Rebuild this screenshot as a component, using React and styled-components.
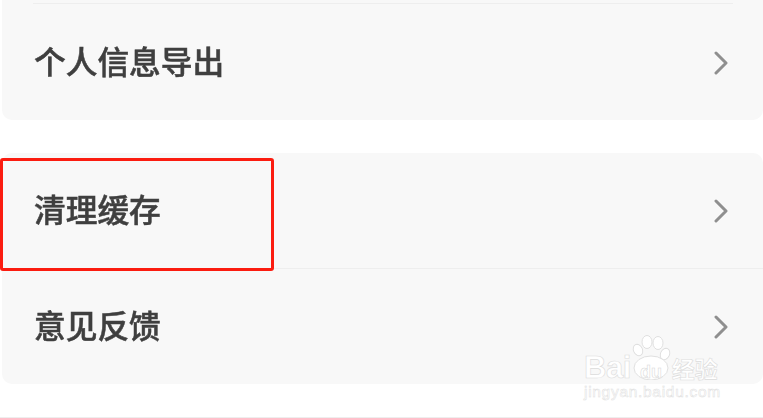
import React from 'react'
import styled, { createGlobalStyle } from 'styled-components'

const GlobalStyle = createGlobalStyle`
  html, body {
    margin: 0;
    padding: 0;
    background: #fff;
    overflow: hidden;
  }
`

const Page = styled.div`
  position: relative;
  width: 763px;
  height: 418px;
  overflow: hidden;
  background: #fff;
  display: flex;
  flex-direction: column;
  gap: 33px;
  font-family: "Liberation Sans", "Noto Sans CJK SC", sans-serif;
`

const Card = styled.section`
  margin-left: 2px;
  background: #f8f8f8;
  border-radius: ${(p) => (p.$flushTop ? '0 0 10px 10px' : '10px')};
  padding-top: ${(p) => (p.$flushTop ? '3px' : '0')};
`

const Divider = styled.div`
  height: 1px;
  margin: ${(p) => (p.$inset ? '0 30px 0 31px' : '0 0 0 30px')};
  background: #eeeeee;
`

const Row = styled.div`
  height: ${(p) => p.$height}px;
  box-sizing: border-box;
  padding: ${(p) => (p.$flushTop ? '2px' : '1px')} 35px 0 32px;
  display: flex;
  align-items: center;
  justify-content: space-between;
`

const Label = styled.span`
  font-size: 31.7px;
  font-weight: 500;
  line-height: 1;
  padding-top: 1px;
  color: #3f3f3f;
  -webkit-text-stroke: 0.5px #3f3f3f;
  filter: blur(0.4px);
`

const Chevron = styled.svg`
  width: 14px;
  height: 24px;
  fill: none;
  stroke: #8f8f8f;
  stroke-width: 3;
  stroke-linecap: round;
  stroke-linejoin: round;
  filter: blur(0.4px);
`

const BottomLine = styled.div`
  position: absolute;
  left: 0;
  right: 0;
  top: 417px;
  height: 1px;
  background: #eeeeee;
`

const Highlight = styled.div`
  position: absolute;
  left: 0;
  top: 158px;
  width: 274px;
  height: 113px;
  box-sizing: border-box;
  border: 3px solid #fb1c10;
  border-radius: 3px;
`

const Watermark = styled.div`
  position: absolute;
  left: 584px;
  top: 334px;
  width: 140px;
  height: 68px;
  color: #fff;
  -webkit-text-stroke: 0.6px #dcdcdc;
`

const WatermarkTop = styled.div`
  position: absolute;
  left: 0;
  top: 19px;
  display: flex;
  align-items: center;
`

const Brand = styled.span`
  font-family: "Liberation Sans", sans-serif;
  font-size: 31px;
  font-weight: 700;
  line-height: 30px;
  letter-spacing: -0.5px;
`

const BrandCn = styled.span`
  margin-left: 41px;
  font-family: "Noto Sans CJK SC", sans-serif;
  font-size: 23px;
  font-weight: 700;
  line-height: 30px;
`

const Paw = styled.svg`
  position: absolute;
  left: 46px;
  top: 0;
  width: 46px;
  height: 46px;
  fill: #fff;
  stroke: #dcdcdc;
  stroke-width: 0.9;
`

const PawText = styled.span`
  position: absolute;
  left: 56px;
  top: 29px;
  font-family: "Liberation Sans", sans-serif;
  font-size: 18px;
  font-weight: 700;
  line-height: 18px;
  -webkit-text-stroke: 0.5px #d6d6d6;
`

const Domain = styled.div`
  position: absolute;
  left: 0;
  top: 49px;
  font-family: "Liberation Sans", sans-serif;
  font-size: 15.5px;
  line-height: 18px;
  letter-spacing: 0.7px;
  white-space: nowrap;
  -webkit-text-stroke: 0.5px #dedede;
`

const Arrow = () => (
  <Chevron viewBox="0 0 14 24">
    <path d="M2 2 L12 12 L2 22" />
  </Chevron>
)

export default function App() {
  return (
    <Page>
      <GlobalStyle />
      <Card $flushTop>
        <Divider $inset />
        <Row $height={116} $flushTop>
          <Label>个人信息导出</Label>
          <Arrow />
        </Row>
      </Card>
      <Card>
        <Row $height={115}>
          <Label>清理缓存</Label>
          <Arrow />
        </Row>
        <Divider />
        <Row $height={115}>
          <Label>意见反馈</Label>
          <Arrow />
        </Row>
      </Card>
      <BottomLine />
      <Highlight />
      <Watermark>
        <WatermarkTop>
          <Brand>Bai</Brand>
          <BrandCn>经验</BrandCn>
        </WatermarkTop>
        <Paw viewBox="0 0 46 46">
          <ellipse cx="8" cy="16" rx="4.5" ry="6" transform="rotate(-25 8 16)" />
          <ellipse cx="17" cy="8" rx="5" ry="6.5" />
          <ellipse cx="28" cy="9" rx="5" ry="6.5" />
          <ellipse cx="35" cy="20" rx="4.5" ry="6" transform="rotate(25 35 20)" />
          <ellipse cx="21" cy="34" rx="17" ry="12" />
        </Paw>
        <PawText>du</PawText>
        <Domain>jingyan.baidu.com</Domain>
      </Watermark>
    </Page>
  )
}
